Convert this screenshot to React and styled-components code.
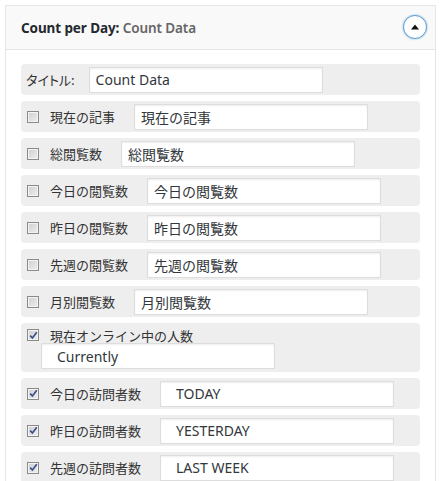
import React from "react";
import styled, { createGlobalStyle } from "styled-components";

const Global = createGlobalStyle`
  html, body { margin: 0; padding: 0; background: #fff; }
  body {
    font-family: "Noto Sans", "Noto Sans CJK JP", sans-serif;
    color: #444;
  }
`;

const Panel = styled.section`
  box-sizing: border-box;
  width: 431px;
  margin: 5px 0 0 5px;
  border: 1px solid #e5e5e5;
  border-bottom: none;
  background: #fff;
`;

const Header = styled.header`
  height: 43px;
  display: flex;
  align-items: center;
  justify-content: space-between;
  padding: 0 8px 0 15px;
  background: #f9f9f9;
  border-bottom: 1px solid #e5e5e5;
`;

const Title = styled.h3`
  margin: 0;
  font-size: 13.5px;
  font-weight: 700;
  color: #23282d;
  letter-spacing: -0.1px;
`;

const SubTitle = styled.span`
  font-weight: 600;
  color: #666;
`;

const Toggle = styled.button`
  box-sizing: border-box;
  width: 24px;
  height: 24px;
  padding: 0;
  border-radius: 50%;
  border: 1.5px solid #5b9dd9;
  background: #fff;
  box-shadow: 0 0 2px rgba(30, 140, 190, 0.6);
  display: flex;
  align-items: center;
  justify-content: center;
  margin-top: -1px;
`;

const Body = styled.div`
  display: flex;
  flex-direction: column;
  gap: 6px;
  padding: 14px 15px 20px 15px;
`;

const Row = styled.div`
  box-sizing: border-box;
  height: 31px;
  display: flex;
  align-items: center;
  padding: 0 5px;
  border-radius: 4px;
  background: #eee;
`;

const TallRow = styled.div`
  box-sizing: border-box;
  height: 49px;
  display: flex;
  flex-direction: column;
  padding: 4px 5px 3px 5px;
  border-radius: 4px;
  background: #eee;
`;

const Line = styled.div`
  display: flex;
  align-items: center;
  height: 16px;
`;

const Label = styled.span`
  font-family: "Noto Sans CJK JP", sans-serif;
  font-size: 13px;
  color: #333;
  white-space: nowrap;
  font-feature-settings: ${(p) => (p.$prop ? '"palt"' : "normal")};
`;

const Box = styled.span`
  box-sizing: border-box;
  flex: none;
  width: 12px;
  height: 12px;
  margin: 0 11px 0 1px;
  border: 1px solid #8a8a8a;
  background: linear-gradient(135deg, #cfcfcf 0%, #eeeeee 100%);
  box-shadow: inset 0 0 0 1px #f4f4f4;
  display: flex;
  align-items: center;
  justify-content: center;
`;

const Field = styled.input`
  box-sizing: border-box;
  flex: none;
  width: 234px;
  height: 26px;
  margin-left: ${(p) => p.$gap}px;
  padding: 0 0 0 ${(p) => p.$indent}px;
  border: 1px solid #ddd;
  background: #fff;
  box-shadow: inset 0 1px 2px rgba(0, 0, 0, 0.07);
  font-family: "Noto Sans", "Noto Sans CJK JP", sans-serif;
  font-size: 14px;
  color: #32373c;
  outline: none;
`;

const Check = ({ checked }) => (
  <Box>
    {checked && (
      <svg width="9" height="9" viewBox="0 0 9 9">
        <path d="M1.2 4.6 L3.4 7 L7.8 1.2" fill="none" stroke="#3a4f8f" strokeWidth="1.7" />
      </svg>
    )}
  </Box>
);

const rows = [
  { label: "現在の記事", value: "現在の記事", checked: false },
  { label: "総閲覧数", value: "総閲覧数", checked: false },
  { label: "今日の閲覧数", value: "今日の閲覧数", checked: false },
  { label: "昨日の閲覧数", value: "昨日の閲覧数", checked: false },
  { label: "先週の閲覧数", value: "先週の閲覧数", checked: false },
  { label: "月別閲覧数", value: "月別閲覧数", checked: false },
];

const visitors = [
  { label: "今日の訪問者数", value: "TODAY" },
  { label: "昨日の訪問者数", value: "YESTERDAY" },
  { label: "先週の訪問者数", value: "LAST WEEK" },
];

export default function App() {
  return (
    <>
      <Global />
      <Panel>
        <Header>
          <Title>
            Count per Day: <SubTitle>Count Data</SubTitle>
          </Title>
          <Toggle aria-label="toggle">
            <svg width="10" height="8" viewBox="0 0 10 8">
              <path d="M5 1.5 L9 6.5 L1 6.5 Z" fill="#111" />
            </svg>
          </Toggle>
        </Header>
        <Body>
          <Row>
            <Label $prop>タイトル:</Label>
            <Field $gap={14} $indent={6} defaultValue="Count Data" />
          </Row>
          {rows.map((r) => (
            <Row key={r.label}>
              <Check checked={r.checked} />
              <Label>{r.label}</Label>
              <Field $gap={19} $indent={6} defaultValue={r.value} />
            </Row>
          ))}
          <TallRow>
            <Line>
              <Check checked />
              <Label>現在オンライン中の人数</Label>
            </Line>
            <Field $gap={15} $indent={15} defaultValue="Currently" />
          </TallRow>
          {visitors.map((r) => (
            <Row key={r.label}>
              <Check checked />
              <Label>{r.label}</Label>
              <Field $gap={19} $indent={15} defaultValue={r.value} />
            </Row>
          ))}
        </Body>
      </Panel>
    </>
  );
}
